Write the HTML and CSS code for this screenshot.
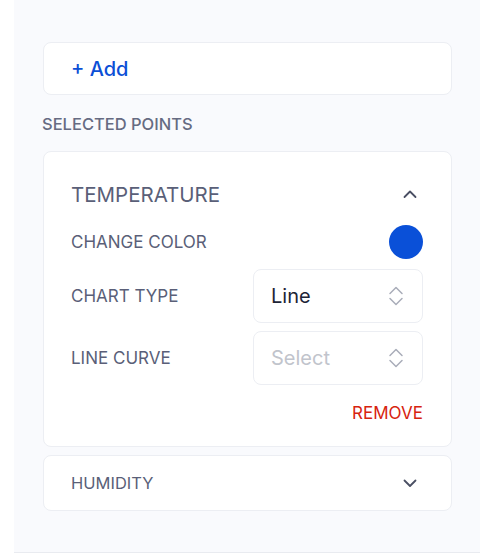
FILE: index.html
```html
<!DOCTYPE html>
<html lang="en">
<head>
    <meta charset="UTF-8">
    <meta name="viewport" content="width=device-width, initial-scale=1.0">
    <title>Selected Points</title>
    <link rel="stylesheet" href="styles.css">
</head>
<body>
    <div class="panel">
        <button class="add-card" type="button">+ Add</button>

        <div class="section-label">SELECTED POINTS</div>

        <div class="point-card open">
            <div class="point-head">
                <span class="point-title">TEMPERATURE</span>
                <svg class="chev" width="14" height="12" viewBox="0 0 14 12">
                    <path d="M1.5 9 L7 3.5 L12.5 9" fill="none" stroke="#4a4f63" stroke-width="1.8" stroke-linecap="round" stroke-linejoin="round"/>
                </svg>
            </div>
            <div class="row first">
                <span class="row-label">CHANGE COLOR</span>
                <span class="swatch"></span>
            </div>
            <div class="row">
                <span class="row-label">CHART TYPE</span>
                <div class="select">
                    <span class="select-value">Line</span>
                    <svg class="updown" width="16" height="22" viewBox="0 0 16 22">
                        <path d="M2 8.5 L8 2.5 L14 8.5 M2 13.5 L8 19.5 L14 13.5" fill="none" stroke="#a9adb9" stroke-width="1.5" stroke-linecap="round" stroke-linejoin="round"/>
                    </svg>
                </div>
            </div>
            <div class="row">
                <span class="row-label">LINE CURVE</span>
                <div class="select">
                    <span class="select-value placeholder">Select</span>
                    <svg class="updown" width="16" height="22" viewBox="0 0 16 22">
                        <path d="M2 8.5 L8 2.5 L14 8.5 M2 13.5 L8 19.5 L14 13.5" fill="none" stroke="#a9adb9" stroke-width="1.5" stroke-linecap="round" stroke-linejoin="round"/>
                    </svg>
                </div>
            </div>
            <div class="remove-row">
                <button class="remove" type="button">REMOVE</button>
            </div>
        </div>

        <div class="point-card">
            <div class="point-head small">
                <span class="point-title sub">HUMIDITY</span>
                <svg class="chev" width="14" height="12" viewBox="0 0 14 12">
                    <path d="M1.5 3.5 L7 9 L12.5 3.5" fill="none" stroke="#4a4f63" stroke-width="1.8" stroke-linecap="round" stroke-linejoin="round"/>
                </svg>
            </div>
        </div>
    </div>
</body>
</html>
```

FILE: styles.css
```css
body {
    margin: 0;
    background: #ffffff;
    font-family: Inter, "Noto Sans", sans-serif;
}

.panel {
    margin-left: 14px;
    width: 466px;
    height: 553px;
    box-sizing: border-box;
    padding: 42px 28px 0 29px;
    background: #f9fafd;
    border-bottom: 1px solid #e9ebf0;
}

.add-card {
    display: block;
    width: 100%;
    height: 53px;
    padding: 0 0 0 27px;
    text-align: left;
    background: #ffffff;
    border: 1px solid #eceef3;
    border-radius: 8px;
    font-family: inherit;
    font-size: 20px;
    font-weight: 500;
    color: #0b4fd6;
}

.section-label {
    margin: 19px 0 0 -1px;
    font-size: 16.5px;
    font-weight: 500;
    color: #666b82;
    line-height: 20px;
}

.point-card {
    background: #ffffff;
    border: 1px solid #eceef3;
    border-radius: 8px;
    padding: 0 28px 0 27px;
}

.point-card.open {
    margin-top: 17px;
    padding-bottom: 23px;
}

.point-card + .point-card {
    margin-top: 8px;
}

.point-head {
    display: flex;
    align-items: center;
    justify-content: space-between;
    height: 62px;
    padding-top: 11px;
}

.point-head.small {
    height: 54px;
    padding-top: 0;
}

.chev {
    margin-right: 6px;
}

.point-title {
    font-size: 20.5px;
    color: #5a5f78;
}

.point-title.sub {
    font-size: 16.5px;
}

.row {
    display: flex;
    align-items: center;
    justify-content: space-between;
    margin-bottom: 8px;
}

.row.first {
    margin-bottom: 10px;
}

.row-label {
    font-size: 17px;
    color: #5a5f78;
}

.swatch {
    width: 34px;
    height: 34px;
    border-radius: 50%;
    background: #0a50d8;
}

.select {
    display: flex;
    align-items: center;
    justify-content: space-between;
    width: 170px;
    height: 54px;
    box-sizing: border-box;
    padding: 0 18px 0 17px;
    border: 1px solid #eceef3;
    border-radius: 8px;
}

.select-value {
    font-size: 20px;
    color: #1d2436;
}

.select-value.placeholder {
    color: #c1c4cc;
}

.remove-row {
    display: flex;
    justify-content: flex-end;
    margin-top: 18px;
}

.remove {
    padding: 0;
    border: none;
    background: none;
    font-family: inherit;
    font-size: 17px;
    line-height: 20px;
    color: #d7230f;
}
```
